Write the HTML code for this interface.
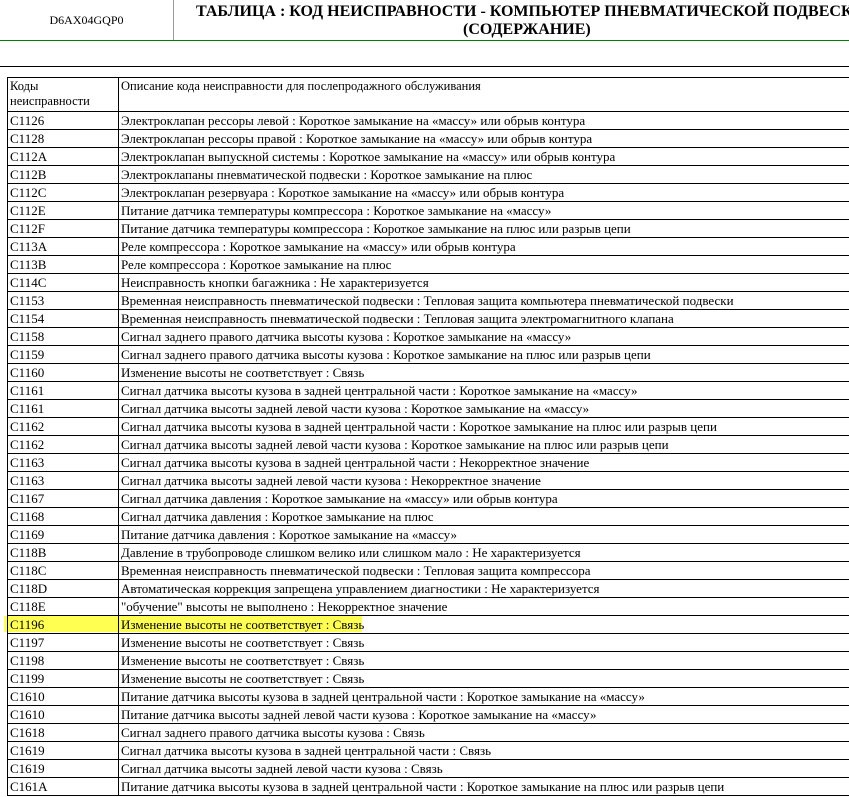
<!DOCTYPE html>
<html><head><meta charset="utf-8"><style>
body{margin:0;width:849px;height:797px;overflow:hidden;background:#fff;font-family:"Liberation Serif","DejaVu Serif",serif;position:relative}
.code{position:absolute;left:0;top:0;width:173px;height:40px;border-right:1px solid #999;font-size:12px;line-height:40px;text-align:center}
.t1{position:absolute;left:196px;top:3px;font-size:16px;font-weight:bold;white-space:nowrap;line-height:18px;font-family:"Liberation Serif",serif}
.t2{position:absolute;left:463px;top:21px;font-size:16px;font-weight:bold;white-space:nowrap;line-height:18px;font-family:"Liberation Serif",serif}
.g{position:absolute;left:0;top:40px;width:849px;height:1px;background:#008000}
.b{position:absolute;left:0;top:66px;width:849px;height:1px;background:#000}
table{position:absolute;left:7px;top:77px;border-collapse:collapse;font-size:13px;width:900px;table-layout:fixed}
td{border:1px solid #000;height:17px;padding:0 2px;line-height:17px;vertical-align:top;white-space:nowrap;overflow:hidden}
tr.h td{height:32px;line-height:15px;padding-top:1px;font-size:12.5px}
.hl{position:absolute;left:4px;top:616px;width:358px;height:16px;background:#ffff33;opacity:.85}
</style></head><body>
<div class="code">D6AX04GQP0</div>
<div class="t1">ТАБЛИЦА : КОД НЕИСПРАВНОСТИ - КОМПЬЮТЕР ПНЕВМАТИЧЕСКОЙ ПОДВЕСКИ</div>
<div class="t2">(СОДЕРЖАНИЕ)</div>
<div class="g"></div><div class="b"></div>
<div class="hl"></div>
<table>
<colgroup><col style="width:111px"><col style="width:789px"></colgroup>
<tr class="h"><td>Коды<br>неисправности</td><td>Описание кода неисправности для послепродажного обслуживания</td></tr>
<tr><td>C1126</td><td>Электроклапан рессоры левой : Короткое замыкание на «массу» или обрыв контура</td></tr>
<tr><td>C1128</td><td>Электроклапан рессоры правой : Короткое замыкание на «массу» или обрыв контура</td></tr>
<tr><td>C112A</td><td>Электроклапан выпускной системы : Короткое замыкание на «массу» или обрыв контура</td></tr>
<tr><td>C112B</td><td>Электроклапаны пневматической подвески : Короткое замыкание на плюс</td></tr>
<tr><td>C112C</td><td>Электроклапан резервуара : Короткое замыкание на «массу» или обрыв контура</td></tr>
<tr><td>C112E</td><td>Питание датчика температуры компрессора : Короткое замыкание на «массу»</td></tr>
<tr><td>C112F</td><td>Питание датчика температуры компрессора : Короткое замыкание на плюс или разрыв цепи</td></tr>
<tr><td>C113A</td><td>Реле компрессора : Короткое замыкание на «массу» или обрыв контура</td></tr>
<tr><td>C113B</td><td>Реле компрессора : Короткое замыкание на плюс</td></tr>
<tr><td>C114C</td><td>Неисправность кнопки багажника : Не характеризуется</td></tr>
<tr><td>C1153</td><td>Временная неисправность пневматической подвески : Тепловая защита компьютера пневматической подвески</td></tr>
<tr><td>C1154</td><td>Временная неисправность пневматической подвески : Тепловая защита электромагнитного клапана</td></tr>
<tr><td>C1158</td><td>Сигнал заднего правого датчика высоты кузова : Короткое замыкание на «массу»</td></tr>
<tr><td>C1159</td><td>Сигнал заднего правого датчика высоты кузова : Короткое замыкание на плюс или разрыв цепи</td></tr>
<tr><td>C1160</td><td>Изменение высоты не соответствует : Связь</td></tr>
<tr><td>C1161</td><td>Сигнал датчика высоты кузова в задней центральной части : Короткое замыкание на «массу»</td></tr>
<tr><td>C1161</td><td>Сигнал датчика высоты задней левой части кузова : Короткое замыкание на «массу»</td></tr>
<tr><td>C1162</td><td>Сигнал датчика высоты кузова в задней центральной части : Короткое замыкание на плюс или разрыв цепи</td></tr>
<tr><td>C1162</td><td>Сигнал датчика высоты задней левой части кузова : Короткое замыкание на плюс или разрыв цепи</td></tr>
<tr><td>C1163</td><td>Сигнал датчика высоты кузова в задней центральной части : Некорректное значение</td></tr>
<tr><td>C1163</td><td>Сигнал датчика высоты задней левой части кузова : Некорректное значение</td></tr>
<tr><td>C1167</td><td>Сигнал датчика давления : Короткое замыкание на «массу» или обрыв контура</td></tr>
<tr><td>C1168</td><td>Сигнал датчика давления : Короткое замыкание на плюс</td></tr>
<tr><td>C1169</td><td>Питание датчика давления : Короткое замыкание на «массу»</td></tr>
<tr><td>C118B</td><td>Давление в трубопроводе слишком велико или слишком мало : Не характеризуется</td></tr>
<tr><td>C118C</td><td>Временная неисправность пневматической подвески : Тепловая защита компрессора</td></tr>
<tr><td>C118D</td><td>Автоматическая коррекция запрещена управлением диагностики : Не характеризуется</td></tr>
<tr><td>C118E</td><td>"обучение" высоты не выполнено : Некорректное значение</td></tr>
<tr><td>C1196</td><td>Изменение высоты не соответствует : Связь</td></tr>
<tr><td>C1197</td><td>Изменение высоты не соответствует : Связь</td></tr>
<tr><td>C1198</td><td>Изменение высоты не соответствует : Связь</td></tr>
<tr><td>C1199</td><td>Изменение высоты не соответствует : Связь</td></tr>
<tr><td>C1610</td><td>Питание датчика высоты кузова в задней центральной части : Короткое замыкание на «массу»</td></tr>
<tr><td>C1610</td><td>Питание датчика высоты задней левой части кузова : Короткое замыкание на «массу»</td></tr>
<tr><td>C1618</td><td>Сигнал заднего правого датчика высоты кузова : Связь</td></tr>
<tr><td>C1619</td><td>Сигнал датчика высоты кузова в задней центральной части : Связь</td></tr>
<tr><td>C1619</td><td>Сигнал датчика высоты задней левой части кузова : Связь</td></tr>
<tr><td>C161A</td><td>Питание датчика высоты кузова в задней центральной части : Короткое замыкание на плюс или разрыв цепи</td></tr>
</table>
</body></html>
